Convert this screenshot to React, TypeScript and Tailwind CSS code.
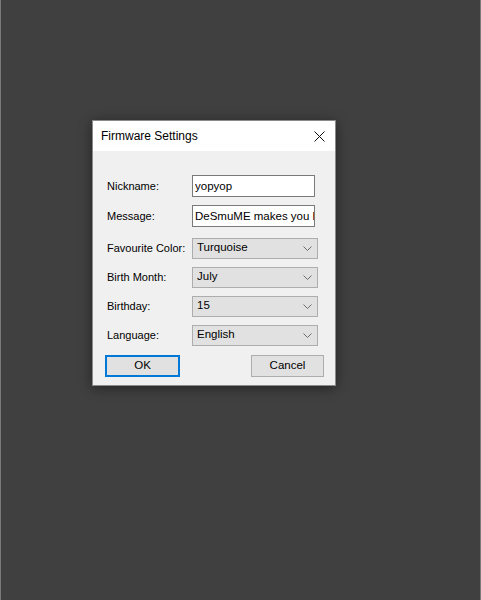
import React from "react";

const font = { fontFamily: '"Liberation Sans", Arial, sans-serif' };

const Chevron: React.FC = () => (
  <svg width="9" height="5" viewBox="0 0 9 5" className="shrink-0">
    <path d="M0.5 0.5 L4.5 4.5 L8.5 0.5" fill="none" stroke="#6d6d6d" strokeWidth="1" />
  </svg>
);

interface RowProps {
  label: string;
  children: React.ReactNode;
}

const Row: React.FC<RowProps> = ({ label, children }) => (
  <div className="flex items-center h-[22px]">
    <div className="w-[85px] text-[11px] text-black">{label}</div>
    {children}
  </div>
);

const TextBox: React.FC<{ value: string }> = ({ value }) => (
  <input
    readOnly
    value={value}
    className="w-[123px] h-[22px] border border-[#7a7a7a] bg-white pl-[2px] text-[11.5px] text-black outline-none"
    style={font}
  />
);

const Combo: React.FC<{ value: string }> = ({ value }) => (
  <div className="w-[126px] h-[21px] border border-[#adadad] bg-[#e1e1e1] pl-[4px] pr-[5px] flex items-center justify-between text-[11.5px] text-black">
    <span>{value}</span>
    <Chevron />
  </div>
);

export default function App() {
  return (
    <div
      className="w-[481px] h-[600px] bg-[#404040] border-l border-r border-[#7a7a7a] pt-[120px] pl-[91px]"
      style={font}
    >
      <div className="w-[244px] h-[266px] border border-[#8a8a8a] shadow-[0_2px_12px_rgba(0,0,0,0.45)] flex flex-col">
        <div className="h-[30px] bg-white flex items-center justify-between pl-[8px] pr-[10px]">
          <span className="text-[12px] text-black">Firmware Settings</span>
          <svg width="11" height="11" viewBox="0 0 11 11">
            <path d="M0.5 0.5 L10.5 10.5 M10.5 0.5 L0.5 10.5" stroke="#111" strokeWidth="1" />
          </svg>
        </div>
        <div className="flex-1 bg-[#f0f0f0] pl-[14px] pt-[24px] flex flex-col">
          <div className="flex flex-col gap-[8px]">
            <Row label="Nickname:">
              <TextBox value="yopyop" />
            </Row>
            <Row label="Message:">
              <TextBox value="DeSmuME makes you happy!" />
            </Row>
          </div>
          <div className="flex flex-col gap-[7px] mt-[10px]">
            <Row label="Favourite Color:">
              <Combo value="Turquoise" />
            </Row>
            <Row label="Birth Month:">
              <Combo value="July" />
            </Row>
            <Row label="Birthday:">
              <Combo value="15" />
            </Row>
            <Row label="Language:">
              <Combo value="English" />
            </Row>
          </div>
          <div className="flex mt-[9px]">
            <div className="ml-[-2px] w-[75px] h-[22px] border-2 border-[#0078d7] bg-[#e1e1e1] flex items-center justify-center text-[11.5px] text-black">
              OK
            </div>
            <div className="ml-[71px] w-[73px] h-[22px] border border-[#adadad] bg-[#e1e1e1] flex items-center justify-center text-[11.5px] text-black">
              Cancel
            </div>
          </div>
        </div>
      </div>
    </div>
  );
}
